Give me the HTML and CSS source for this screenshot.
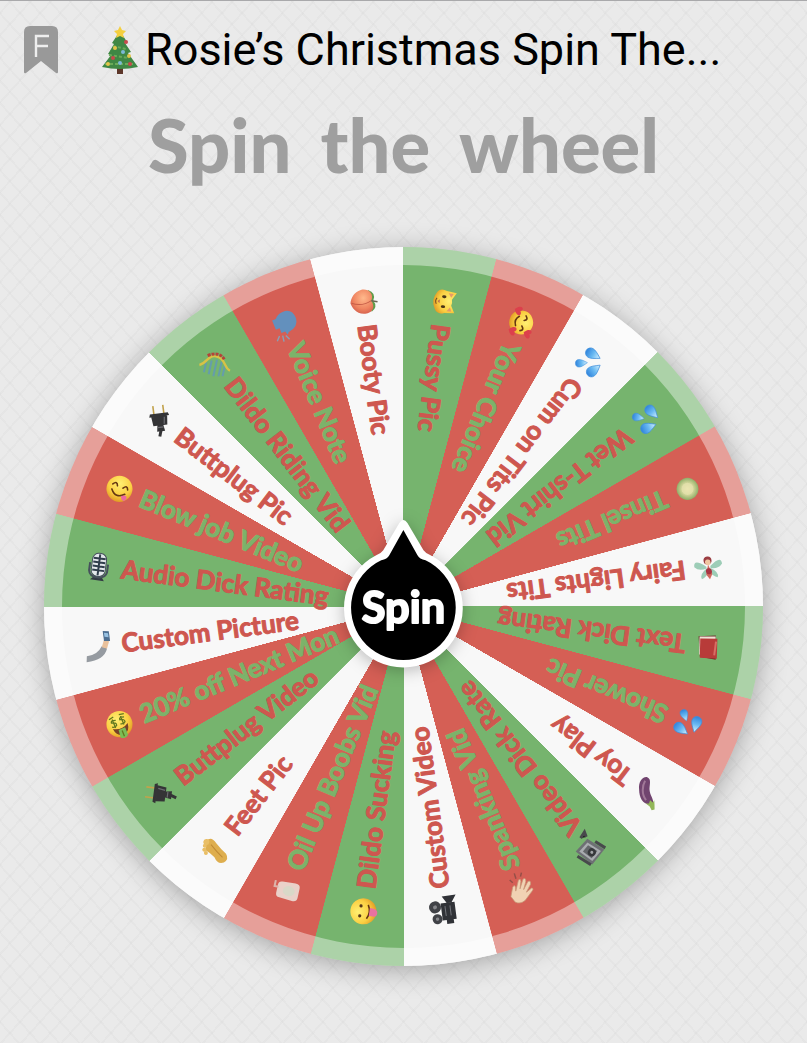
FILE: index.html
```html
<!DOCTYPE html>
<html lang="en">
<head>
<meta charset="utf-8">
<meta name="viewport" content="width=device-width, initial-scale=1">
<title>Spin the wheel</title>
<link rel="stylesheet" href="styles.css">
</head>
<body>
<svg class="defs" aria-hidden="true">
  <defs>
    <radialGradient id="gold" cx=".45" cy=".3" r=".75"><stop offset="0" stop-color="#ffef72"/><stop offset=".6" stop-color="#fbcf42"/><stop offset="1" stop-color="#dd9320"/></radialGradient>
    <radialGradient id="fruit" cx=".35" cy=".4" r=".75"><stop offset="0" stop-color="#ffb98c"/><stop offset=".6" stop-color="#ef8460"/><stop offset="1" stop-color="#cc5547"/></radialGradient>
    <linearGradient id="water" x1="0" y1="0" x2="0" y2="1"><stop offset="0" stop-color="#d9f3ff"/><stop offset=".5" stop-color="#69b9f2"/><stop offset="1" stop-color="#2f83dc"/></linearGradient>
    <radialGradient id="melon"><stop offset="0" stop-color="#e9e5ad"/><stop offset=".6" stop-color="#c9d093"/><stop offset="1" stop-color="#8fae68"/></radialGradient>
    <path id="drop" d="M0-8C3-3 5 0 5 3A5 5 0 0 1-5 3C-5 0-3-3 0-8Z" fill="url(#water)" stroke="#3f8fdc" stroke-width=".7"/>
    <g id="i-drops"><use href="#drop" transform="translate(-8 3) rotate(-8)"/><use href="#drop" transform="translate(4 -7) rotate(-75)"/><use href="#drop" transform="translate(6 7) rotate(-42) scale(.75)"/></g>
    <g id="i-mic"><path d="M-4 11L-7 14H7L4 10" fill="#333b44"/><path d="M-9-3V5Q-8 11 0 11Q8 11 9 5V-3" fill="none" stroke="#46505c" stroke-width="2"/><rect x="-7" y="-13" width="14" height="23" rx="6" fill="#e4e8ec" stroke="#46505c"/><path d="M-6-8H6M-6-4H6M-6 0H6M-6 4H6M0-12V9" stroke="#303d4c" stroke-width="2"/></g>
    <g id="i-yum"><circle r="13" fill="url(#gold)"/><path d="M-8-2Q-5-7-3-2M3-2Q6-7 8-2M-7 3Q0 11 7 3" fill="none" stroke="#643612" stroke-width="1.6" stroke-linecap="round"/><path d="M4 6Q9 2 10 6Q10 11 6 9Z" fill="#ec67a0"/></g>
    <g id="i-plug"><path d="M-14-5H-5M-14 5H-5" stroke="#c2a24c" stroke-width="1.6"/><path d="M-6-9L-3-10V10L-6 9ZM-3-8L6-7V7L-3 8ZM6-3L12-4V4L6 3Z" fill="#343436"/><path d="M11 0L17 2" stroke="#343436" stroke-width="3"/><path d="M-2-5L5-4M8-3V3" stroke="#6b6b70" stroke-width="1.2"/></g>
    <g id="i-coaster"><path d="M-10 2V12M-5-1V13M0-3V14M5-2V13M9 1V12" stroke="#659dab" stroke-width="2"/><path d="M-16 6C-9 3-10-7 0-6C8-6 8 3 15 5" fill="none" stroke="#d8c246" stroke-width="2.4"/><path d="M-10-5Q0-12 7-5" fill="none" stroke="#b64239" stroke-width="3" stroke-dasharray="3 1"/></g>
    <g id="i-head"><path d="M-10 1Q-9-10 0-11Q11-11 11-1Q11 5 7 8V12H-3V8H-8L-8 4L-12 3Z" fill="#6390bd"/><path d="M-12 5L-17 3M-11 8L-17 9M-10 11L-14 15" stroke="#8b9fb4" stroke-width="1.4"/></g>
    <g id="i-peach"><path d="M-11-6Q-7-14 0-10Q7-14 11-7L4-5H-5Z" fill="#5f9c49"/><path d="M0-8C8-12 13-6 12 1C11 9 4 12 0 13C-5 12-11 8-12 1C-13-6-7-12 0-8Z" fill="url(#fruit)"/><path d="M0-8Q5 2 0 12" fill="none" stroke="#c65e48"/><path d="M0-8L2-14" stroke="#6c6652" stroke-width="1.5"/></g>
    <g id="i-cat"><path d="M-11-2L-10-12L-3-8Q0-9 3-8L10-12L11-2Q14 5 8 8Q0 13-8 8Q-14 5-11-2Z" fill="url(#gold)"/><path d="M-9-4V-9L-5-7M9-4V-9L5-7" fill="#e69a68"/><ellipse cx="-5" cy="0" rx="1.4" ry="2.2" fill="#493316"/><ellipse cx="5" cy="0" rx="1.4" ry="2.2" fill="#493316"/><path d="M-2 4H2L0 6Z" fill="#b76756"/><path d="M-3 7Q0 9 3 7" fill="none" stroke="#724821"/></g>
    <path id="heart" d="M0 4C-8-1-3-6 0-2C3-6 8-1 0 4Z" fill="#dc404c"/>
    <g id="i-love"><circle r="12" fill="url(#gold)"/><path d="M-8-2Q-5-6-3-2M3-2Q6-6 8-2M-5 4Q0 8 5 4" fill="none" stroke="#643612" stroke-width="1.6" stroke-linecap="round"/><use href="#heart" x="-10" y="7"/><use href="#heart" x="11" y="5"/><use href="#heart" x="8" y="-10"/></g>
    <g id="i-ball"><circle r="11" fill="url(#melon)"/><circle r="6" fill="#ece6b4" opacity=".6"/></g>
    <g id="i-fairy"><path d="M-2 0Q-14-10-14-1Q-10 4-2 2ZM2 0Q14-10 14-1Q10 4 2 2ZM-2 2Q-10 7-8 12Q-3 11 0 4ZM2 2Q10 7 8 12Q3 11 0 4Z" fill="#9dcdb7"/><path d="M0-2L-3 8L0 13L3 8Z" fill="#d1695e"/><circle cy="-6" r="4" fill="#9b3d42"/><circle cy="-4" r="2.8" fill="#f0c6a1"/><circle cy="5" r="3" fill="#a83643"/></g>
    <g id="i-book"><path d="M-9-12L7-11L11 9L-6 12Z" fill="#6b2926"/><path d="M-8-9L8-9L10 9L-6 11Z" fill="#eee3d5"/><path d="M-10-11L7-12L9 7L-8 9Z" fill="#b83b39"/><path d="M-7-8V6" stroke="#d76e64" stroke-width="2"/></g>
    <g id="i-eggplant"><path d="M1-11C7-9 9-2 7 6C6 13 1 18-4 16C-8 13-4 8-3 3C-2-2-5-7-3-11Z" fill="#71446f"/><path d="M3-6C6 1 3 9-1 13" fill="none" stroke="#a17898" stroke-width="2"/><path d="M-5-8L-4-13L-3-17H0L1-13L4-9L1-10L-1-7L-3-10Z" fill="#93b759"/></g>
    <g id="i-projector"><path d="M-11-8H9L12 9L-9 11Z" fill="#6e7074"/><path d="M-9-5H7L9 7L-7 8Z" fill="#a9acb0"/><path d="M-6-3H5L6 5L-5 6Z" fill="#64666a"/><circle cx="-2" cy="1" r="4" fill="#36383b"/><circle cx="-2" cy="1" r="1.5" fill="#a3a5a8"/><path d="M-11-10H1M11-9L15-12V-5M-8 12H8" stroke="#48494c" stroke-width="3"/></g>
    <g id="i-clap"><path d="M-7 10L-10 1Q-10-3-7 0L-5 3L-8-8Q-7-11-5-8L-2-1L-4-11Q-2-14 0-10L2-2L2-11Q4-14 6-10L6-1L9-7Q12-8 11-4L9 7Q6 13 0 13Z" transform="scale(.9 1)" fill="#f1d2b3" stroke="#c69777" stroke-width=".7"/><path d="M-10-8L-14-12M-7-12L-8-16M-11-3L-15-4" stroke="#954f48" stroke-width="1.5"/></g>
    <g id="i-camera"><circle cx="-5" cy="-8" r="6" fill="#404247"/><circle cx="7" cy="-7" r="5" fill="#404247"/><circle cx="-5" cy="-8" r="2" fill="#85868a"/><circle cx="7" cy="-7" r="1.7" fill="#85868a"/><path d="M-8-2H9V12H-8ZM-8 4L-15 0V14L-8 9ZM8 2H13V9H8Z" fill="#303237"/><path d="M-5 2H5M-5 7H5" stroke="#74767c"/></g>
    <g id="i-tongue"><circle r="13" fill="url(#gold)"/><circle cx="-5" cy="-3" r="1.6" fill="#573618"/><circle cx="5" cy="-3" r="1.6" fill="#573618"/><path d="M-7 4Q0 8 7 4" fill="none" stroke="#643612" stroke-width="1.6"/><path d="M-4 6H4V10Q3 14 0 14Q-4 14-4 10Z" fill="#e972a0"/></g>
    <g id="i-lotion"><path d="M-8-5Q-8-9-4-9H4Q8-9 8-5L9 8Q9 13 5 13H-5Q-9 13-9 8Z" fill="#ead1c9"/><ellipse cy="3" rx="5" ry="6" fill="#d9d8c8"/><path d="M2-8V-12H8" fill="none" stroke="#ddb4aa" stroke-width="2"/></g>
    <g id="i-foot"><path d="M-11-8Q-7-14-1-7Q4-2 10 2Q14 7 9 11Q3 14-1 7Q-6 3-11 1Z" fill="#deae4e"/><path d="M-6-5Q0 1 7 6" fill="none" stroke="#c08b36"/><circle cx="-11" cy="-7" r="3" fill="#e9be65"/><circle cx="-12" cy="-3" r="2" fill="#e9be65"/><circle cx="-12" cy="1" r="2" fill="#e9be65"/><circle cx="-10" cy="4" r="2" fill="#e9be65"/></g>
    <g id="i-money"><circle r="13" fill="url(#gold)"/><path d="M-8 2Q0 7 8 2Q7 11 0 11Q-7 11-8 2Z" fill="#774127"/><path d="M-3 5H4V13Q0 16-4 13Z" fill="#7bbd55"/><path d="M-2-5Q-7-7-7-4Q-2-3-3 0Q-5 2-8 0M-5-7V2M7-5Q2-7 2-4Q7-3 6 0Q4 2 1 0M4-7V2M-8-8L-3-9M3-9L8-8M0 7V13" fill="none" stroke="#62781f" stroke-width="1.3"/></g>
    <g id="i-selfie"><path d="M-13 8Q-2 8 3 0L8 3Q4 14-14 14Z" fill="#969ba1"/><path d="M3 1L6-6L11-4L8 3Z" fill="#e9c19c"/><path d="M6-15L12-14V-4L6-5Z" fill="#4e6f91"/><path d="M7-13L11-12V-8L7-9Z" fill="#98c2e2"/></g>
    <g id="i-tree"><path d="M-3 16H3V23H-3Z" fill="#5d372a"/><path d="M0-20L7-9L5-8L11 1L8 2L18 16Q0 20-18 16L-9 4L-12 3L-6-7L-8-8Z" fill="#3f8744"/><path d="M-7-5L6-2M-11 4L9 7M-15 13L14 13" stroke="#6aaa58" stroke-width="2" stroke-dasharray="3 2"/><path d="M0-25L2-21L6-20L3-17L4-13L0-15L-4-13L-3-17L-6-20L-2-21Z" fill="#f4cf3f"/><g fill="#e3c449"><circle cx="-5" cy="-3" r="2"/><circle cx="9" cy="5" r="2"/><circle cx="-12" cy="13" r="2"/></g><g fill="#c84a4c"><circle cx="6" cy="-9" r="2"/><circle cx="-7" cy="7" r="2"/><circle cx="10" cy="13" r="2"/></g><g fill="#7cb9d7"><circle cx="3" cy="1" r="2"/><circle cx="0" cy="12" r="2"/></g></g>
  </defs>
</svg>

<header class="bar">
  <svg class="bookmark" viewBox="0 0 34 48" role="img" aria-label="Favourites">
    <path d="M6 0H28Q34 0 34 6V46Q34 48 32 47L17 35L2 47Q0 48 0 46V6Q0 0 6 0Z" fill="#999"/>
    <path d="M12 31V10H25M12 20H24" fill="none" stroke="#eee" stroke-width="2.4"/>
  </svg>
  <h1 class="name"><svg class="tree" viewBox="-18 -26 36 50" aria-hidden="true"><use href="#i-tree"/></svg>Rosie’s Christmas Spin The...</h1>
</header>

<main class="game">
  <h2 class="prompt"><span>Spin</span><span>the</span><span>wheel</span></h2>
  <div class="wheel">
    <svg class="labels" viewBox="-359 -359 718 718">
      <g transform="rotate(7.5)"><use href="#i-mic" x="-307"/><text class="red" x="-284" y="9">Audio Dick Rating</text></g>
      <g transform="rotate(22.5)"><use href="#i-yum" x="-307"/><text class="green" x="-284" y="9">Blow job Video</text></g>
      <g transform="rotate(37.5)"><use href="#i-plug" transform="translate(-307) rotate(45)"/><text class="red" x="-284" y="9">Buttplug Pic</text></g>
      <g transform="rotate(52.5)"><use href="#i-coaster" transform="translate(-307) rotate(-40)"/><text class="red" x="-284" y="9">Dildo Riding Vid</text></g>
      <g transform="rotate(67.5)"><use href="#i-head" transform="translate(-307) scale(-1 1)"/><text class="green" x="-284" y="9">Voice Note</text></g>
      <g transform="rotate(82.5)"><use href="#i-peach" x="-307"/><text class="red" x="-284" y="9">Booty Pic</text></g>
      <g transform="rotate(97.5)"><use href="#i-cat" x="-307"/><text class="red" x="-284" y="9">Pussy Pic</text></g>
      <g transform="rotate(112.5)"><use href="#i-love" x="-307"/><text class="green" x="-284" y="9">Your Choice</text></g>
      <g transform="rotate(127.5)"><use href="#i-drops" x="-307"/><text class="red" x="-284" y="9">Cum on Tits Pic</text></g>
      <g transform="rotate(142.5)"><use href="#i-drops" x="-307"/><text class="red" x="-284" y="9">Wet T-shirt Vid</text></g>
      <g transform="rotate(157.5)"><use href="#i-ball" x="-307"/><text class="green" x="-284" y="9">Tinsel Tits</text></g>
      <g transform="rotate(172.5)"><use href="#i-fairy" transform="translate(-307) rotate(180)"/><text class="red" x="-284" y="9">Fairy Lights Tits</text></g>
      <g transform="rotate(187.5)"><use href="#i-book" x="-307"/><text class="red" x="-284" y="9">Text Dick Rating</text></g>
      <g transform="rotate(202.5)"><use href="#i-drops" x="-307"/><text class="green" x="-284" y="9">Shower Pic</text></g>
      <g transform="rotate(217.5)"><use href="#i-eggplant" transform="translate(-307) rotate(-52)"/><text class="red" x="-284" y="9">Toy Play</text></g>
      <g transform="rotate(232.5)"><use href="#i-projector" transform="translate(-307) rotate(160) scale(-1 1)"/><text class="red" x="-284" y="9">Video Dick Rate</text></g>
      <g transform="rotate(247.5)"><use href="#i-clap" transform="translate(-307) rotate(140)"/><text class="green" x="-284" y="9">Spanking Vid</text></g>
      <g transform="rotate(262.5)"><use href="#i-camera" transform="translate(-307) scale(-1 1)"/><text class="red" x="-284" y="9">Custom Video</text></g>
      <g transform="rotate(277.5)"><use href="#i-tongue" x="-307"/><text class="red" x="-284" y="9">Dildo Sucking</text></g>
      <g transform="rotate(292.5)"><use href="#i-lotion" transform="translate(-307) rotate(-10)"/><text class="green" x="-284" y="9">Oil Up Boobs Vid</text></g>
      <g transform="rotate(307.5)"><use href="#i-foot" transform="translate(-307) rotate(60)"/><text class="red" x="-284" y="9">Feet Pic</text></g>
      <g transform="rotate(322.5)"><use href="#i-plug" transform="translate(-307) rotate(45)"/><text class="red" x="-284" y="9">Buttplug Video</text></g>
      <g transform="rotate(337.5)"><use href="#i-money" x="-307"/><text class="green" x="-284" y="9">20% off Next Mon</text></g>
      <g transform="rotate(352.5)"><use href="#i-selfie" x="-307"/><text class="red" x="-284" y="9">Custom Picture</text></g>
    </svg>
    <button class="hub" type="button">
      <svg viewBox="-60 -88 120 148">
        <path class="hub-edge" d="M-4-84Q0-90 4-84L20-57Q22-54 27-52A59 59 0 1 1-27-52Q-22-54-20-57Z"/>
        <path d="M0-77L14-52Q16-48 22-47A52 52 0 1 1-22-47Q-16-48-14-52Z"/>
        <text x="0" y="15" text-anchor="middle">Spin</text>
      </svg>
    </button>
  </div>
</main>
</body>
</html>
```
FILE: styles.css
```css
* { box-sizing: border-box; }

body {
  margin: 0;
  min-height: 100vh;
  border-top: 1px solid #a9a9ab;
  background:
    repeating-linear-gradient(48deg, transparent 0 13px, rgba(0, 0, 0, .018) 13px 15px),
    repeating-linear-gradient(-48deg, transparent 0 13px, rgba(0, 0, 0, .018) 13px 15px),
    #eaeaea;
  font-family: Lato, "Open Sans", sans-serif;
}

.defs { position: absolute; width: 0; height: 0; }

.bar {
  display: flex;
  align-items: center;
  gap: 43px;
  height: 98px;
  padding: 0 24px;
}

.bookmark { flex: none; width: 34px; height: 48px; }

.name {
  display: flex;
  align-items: center;
  gap: 6px;
  margin: 0;
  color: #000;
  font: 400 45px/56px Roboto, "Liberation Sans", sans-serif;
  white-space: nowrap;
}

.tree { flex: none; width: 38px; height: 50px; }

.game { padding: 0 44px 76px; }

.prompt {
  display: flex;
  justify-content: center;
  gap: 29px;
  margin: 0 0 56px;
  color: #9f9f9f;
  font-size: 74px;
  font-weight: 900;
  line-height: 92px;
}

.wheel {
  position: relative;
  aspect-ratio: 1;
  border-radius: 50%;
  background: repeating-conic-gradient(#76b46e 0 14.9deg, #d55f55 15deg 29.9deg, #f8f8f8 30deg 44.9deg, #76b46e 45deg);
  box-shadow: inset 0 0 0 18px rgba(255, 255, 255, .4), 0 4px 28px rgba(0, 0, 0, .3);
}

.labels { display: block; width: 100%; height: 100%; }

.labels text {
  font-size: 26px;
  font-weight: 700;
  stroke-width: 1px;
  stroke-linejoin: round;
}

.red { fill: #ce574f; stroke: #ce574f; }
.green { fill: #7cb36a; stroke: #7cb36a; }

.hub {
  position: absolute;
  top: 37.8%;
  left: 41.6%;
  width: 16.8%;
  padding: 0;
  border: 0;
  background: none;
  cursor: pointer;
}

.hub svg { display: block; width: 100%; overflow: visible; filter: drop-shadow(0 3px 8px rgba(0, 0, 0, .25)); }
.hub-edge { fill: #fff; }

.hub text {
  fill: #fff;
  stroke: #fff;
  stroke-width: 2px;
  stroke-linejoin: round;
  font: 700 43px Lato, sans-serif;
}
```
